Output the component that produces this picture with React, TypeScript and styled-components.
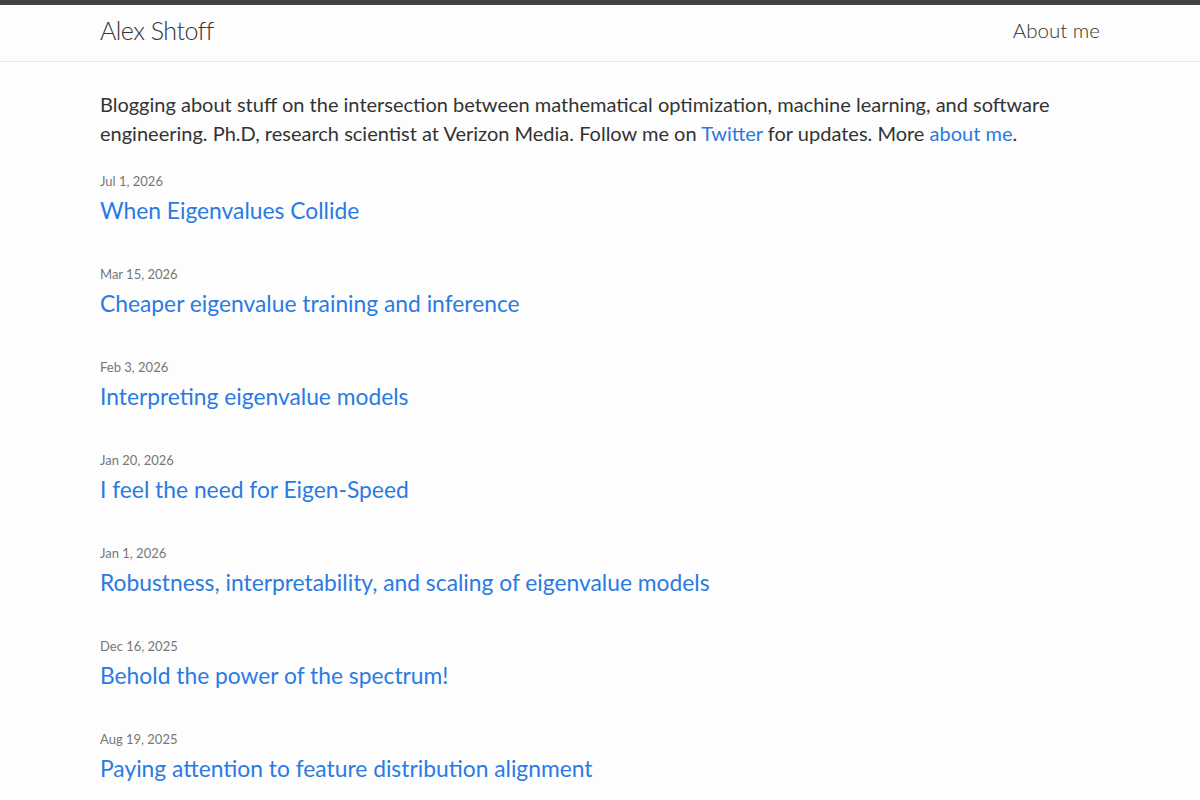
import styled, { createGlobalStyle } from "styled-components";

const GlobalStyle = createGlobalStyle`
    html, body {
        margin: 0;
        padding: 0;
        background: #fdfdfd;
    }
    body {
        font-family: "Lato", "Liberation Sans", sans-serif;
        color: #333;
    }
`;

const Header = styled.header`
    border-top: 5px solid #424242;
    border-bottom: 1px solid #e8e8e8;
`;

const Wrapper = styled.div`
    max-width: 1000px;
    margin: 0 auto;
    padding: 0 100px;
`;

const HeaderRow = styled(Wrapper)`
    display: flex;
    align-items: flex-start;
    justify-content: space-between;
    height: 56px;
    line-height: 50px;
`;

const SiteTitle = styled.a`
    font-size: 25px;
    font-weight: 300;
    letter-spacing: -0.5px;
    color: #333;
    text-decoration: none;
`;

const PageLink = styled.a`
    font-size: 20.5px;
    font-weight: 300;
    color: #333;
    text-decoration: none;
`;

const Main = styled(Wrapper)`
    padding-top: 28px;
`;

const Intro = styled.p`
    font-size: 20px;
    line-height: 29px;
    margin: 0 0 22px;
`;

const Link = styled.a`
    color: #2a7ae2;
    text-decoration: none;
`;

const PostList = styled.ul`
    list-style: none;
    margin: 0;
    padding: 0;
`;

const PostItem = styled.li`
    margin-bottom: 34px;
`;

const PostMeta = styled.div`
    font-size: 13px;
    line-height: 22px;
    color: #777;
`;

const PostTitle = styled.a`
    display: block;
    font-size: 22.8px;
    line-height: 37px;
    color: #2a7ae2;
    text-decoration: none;
`;

const posts = [
    { date: "Jul 1, 2026", title: "When Eigenvalues Collide" },
    { date: "Mar 15, 2026", title: "Cheaper eigenvalue training and inference" },
    { date: "Feb 3, 2026", title: "Interpreting eigenvalue models" },
    { date: "Jan 20, 2026", title: "I feel the need for Eigen-Speed" },
    { date: "Jan 1, 2026", title: "Robustness, interpretability, and scaling of eigenvalue models" },
    { date: "Dec 16, 2025", title: "Behold the power of the spectrum!" },
    { date: "Aug 19, 2025", title: "Paying attention to feature distribution alignment" },
];

const App = () => {
    return (
        <>
            <GlobalStyle />
            <Header>
                <HeaderRow>
                    <SiteTitle href="#">Alex Shtoff</SiteTitle>
                    <PageLink href="#">About me</PageLink>
                </HeaderRow>
            </Header>
            <Main>
                <Intro>
                    Blogging about stuff on the intersection between mathematical optimization, machine learning, and software
                    engineering. Ph.D, research scientist at Verizon Media. Follow me on <Link href="#">Twitter</Link> for
                    updates. More <Link href="#">about me</Link>.
                </Intro>
                <PostList>
                    {posts.map(p => (
                        <PostItem key={p.title}>
                            <PostMeta>{p.date}</PostMeta>
                            <PostTitle href="#">{p.title}</PostTitle>
                        </PostItem>
                    ))}
                </PostList>
            </Main>
        </>
    );
};

export default App;
